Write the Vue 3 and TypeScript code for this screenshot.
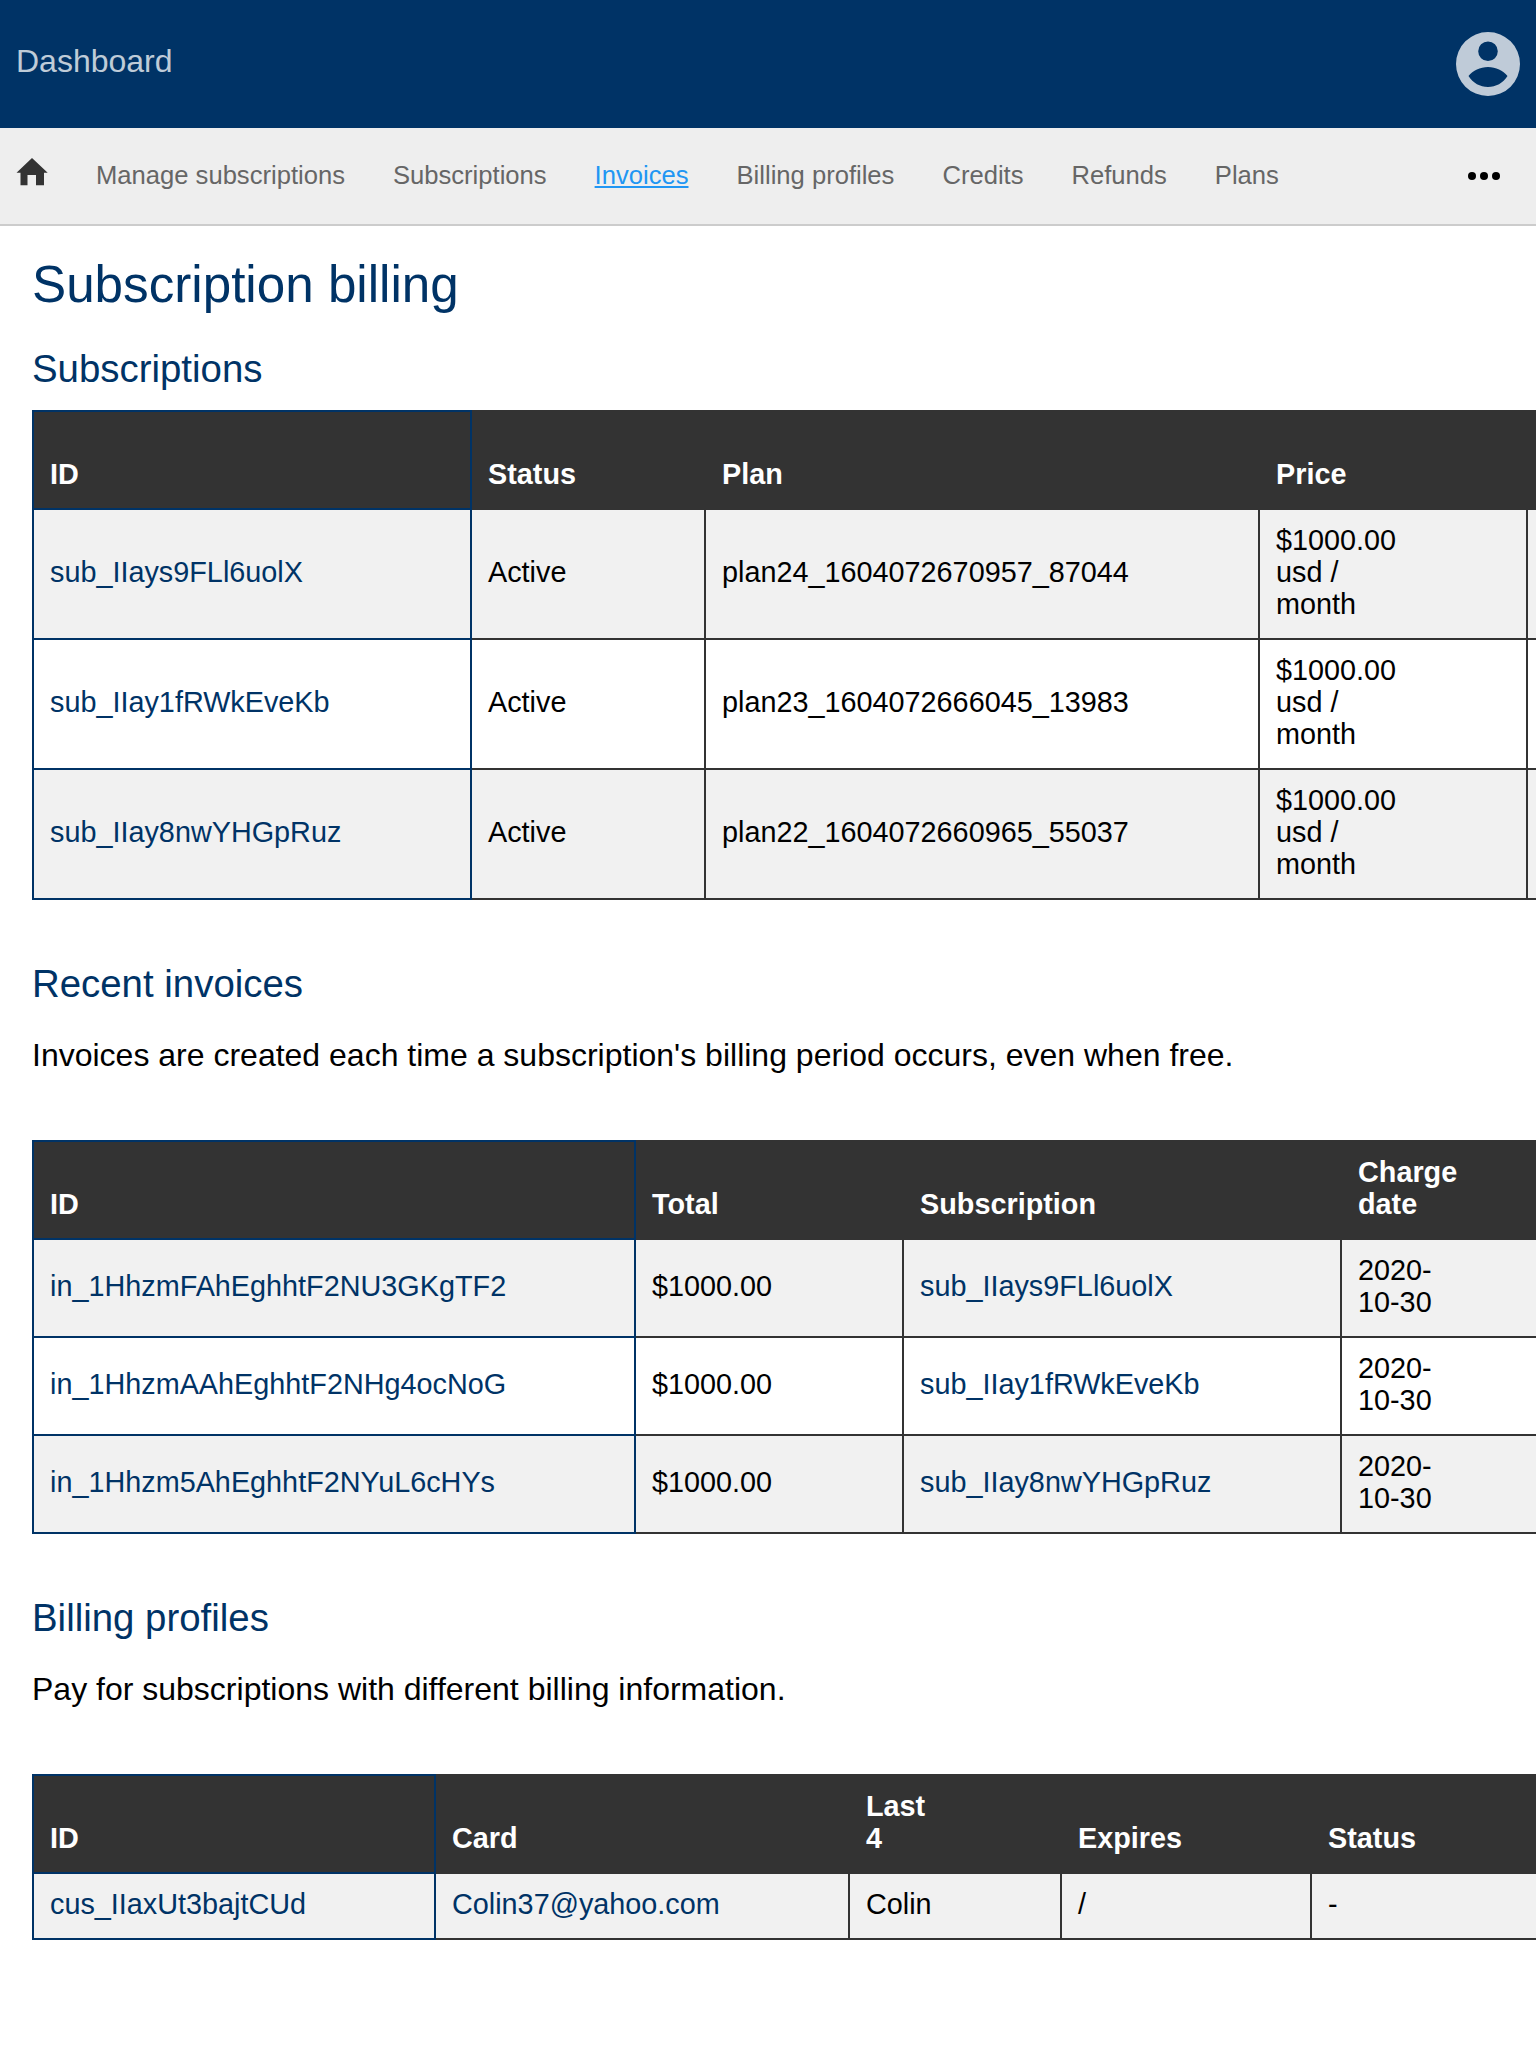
<template>
  <div class="page">
    <header class="topbar">
      <span class="brand">Dashboard</span>
      <svg class="avatar" viewBox="0 0 64 64" width="64" height="64">
        <path
          fill-rule="evenodd"
          d="M32 0a32 32 0 1 0 0 64a32 32 0 1 0 0-64ZM32 9.5a9.8 9.8 0 1 1 0 19.6a9.8 9.8 0 1 1 0-19.6ZM12.500 44C17 38.500 24 35 32 35C40 35 47 38.500 51.500 44C47 51 40 55 32 55C24 55 17 51 12.500 44Z"
        />
      </svg>
    </header>

    <nav class="navbar">
      <svg class="home" viewBox="0 0 32 32" width="32" height="32">
        <path d="M16 0 L31.700 14.700 L28 14.700 L28 27.300 L20 27.300 L20 17 L11.500 17 L11.500 27.300 L4.500 27.300 L4.500 14.700 L0.500 14.700 Z" />
      </svg>
      <a v-for="item in navItems" :key="item" :class="{ active: item === 'Invoices' }">{{ item }}</a>
      <span class="more"><i></i><i></i><i></i></span>
    </nav>

    <main class="content">
      <h1>Subscription billing</h1>

      <h2 class="first">Subscriptions</h2>
      <div class="table-wrap">
        <table class="subs">
          <colgroup>
            <col v-for="w in [438, 234, 554, 268, 200]" :key="w" :style="{ width: w + 'px' }" />
          </colgroup>
          <thead>
            <tr>
              <th>ID</th><th>Status</th><th>Plan</th><th>Price</th><th></th>
            </tr>
          </thead>
          <tbody>
            <tr v-for="s in subscriptions" :key="s.id">
              <td><a>{{ s.id }}</a></td>
              <td>Active</td>
              <td>{{ s.plan }}</td>
              <td>$1000.00<br />usd /<br />month</td>
              <td></td>
            </tr>
          </tbody>
        </table>
      </div>

      <h2>Recent invoices</h2>
      <p>Invoices are created each time a subscription's billing period occurs, even when free.</p>
      <div class="table-wrap">
        <table class="invoices">
          <colgroup>
            <col v-for="w in [602, 268, 438, 300]" :key="w" :style="{ width: w + 'px' }" />
          </colgroup>
          <thead>
            <tr>
              <th>ID</th><th>Total</th><th>Subscription</th><th>Charge<br />date</th>
            </tr>
          </thead>
          <tbody>
            <tr v-for="inv in invoices" :key="inv.id">
              <td><a>{{ inv.id }}</a></td>
              <td>$1000.00</td>
              <td><a>{{ inv.sub }}</a></td>
              <td>2020-<br />10-30</td>
            </tr>
          </tbody>
        </table>
      </div>

      <h2>Billing profiles</h2>
      <p>Pay for subscriptions with different billing information.</p>
      <div class="table-wrap">
        <table class="profiles">
          <colgroup>
            <col v-for="w in [402, 414, 212, 250, 300]" :key="w" :style="{ width: w + 'px' }" />
          </colgroup>
          <thead>
            <tr>
              <th>ID</th><th>Card</th><th>Last<br />4</th><th>Expires</th><th>Status</th>
            </tr>
          </thead>
          <tbody>
            <tr>
              <td><a>cus_IIaxUt3bajtCUd</a></td>
              <td><a>Colin37@yahoo.com</a></td>
              <td>Colin</td>
              <td>/</td>
              <td>-</td>
            </tr>
          </tbody>
        </table>
      </div>
    </main>
  </div>
</template>

<script setup lang="ts">
const navItems: string[] = [
  'Manage subscriptions',
  'Subscriptions',
  'Invoices',
  'Billing profiles',
  'Credits',
  'Refunds',
  'Plans',
]

const subscriptions = [
  { id: 'sub_IIays9FLl6uolX', plan: 'plan24_1604072670957_87044' },
  { id: 'sub_IIay1fRWkEveKb', plan: 'plan23_1604072666045_13983' },
  { id: 'sub_IIay8nwYHGpRuz', plan: 'plan22_1604072660965_55037' },
]

const invoices = [
  { id: 'in_1HhzmFAhEghhtF2NU3GKgTF2', sub: 'sub_IIays9FLl6uolX' },
  { id: 'in_1HhzmAAhEghhtF2NHg4ocNoG', sub: 'sub_IIay1fRWkEveKb' },
  { id: 'in_1Hhzm5AhEghhtF2NYuL6cHYs', sub: 'sub_IIay8nwYHGpRuz' },
]
</script>

<style>
html,
body {
  margin: 0;
  background: #fff;
}
</style>

<style scoped>
.page {
  font-family: 'Liberation Sans', Arial, sans-serif;
  font-size: 28.8px;
  color: #000;
  overflow: hidden;
}

.topbar {
  height: 128px;
  background: #003366;
  display: flex;
  align-items: center;
  justify-content: space-between;
  padding: 0 16px;
}

.brand {
  font-size: 32px;
  color: rgba(255, 255, 255, 0.75);
  margin-top: -6px;
}

.avatar {
  fill: rgba(255, 255, 255, 0.75);
}

.navbar {
  height: 96px;
  background: #eee;
  border-bottom: 2px solid #ccc;
  display: flex;
  align-items: center;
  gap: 48px;
  padding: 0 16px;
  font-size: 25.6px;
  color: #666;
}

.navbar a {
  margin-top: -2px;
}

.home {
  fill: #333;
  margin-top: -4px;
}

.navbar a.active {
  color: #2196f3;
  text-decoration: underline;
}

.more {
  margin-left: auto;
  margin-right: 20px;
  display: flex;
  gap: 4px;
}

.more i {
  width: 8px;
  height: 8px;
  border-radius: 50%;
  background: #000;
}

.content {
  padding-left: 32px;
}

h1,
h2 {
  font-weight: 400;
  color: #003366;
  margin: 0;
}

h1 {
  font-size: 51.2px;
  line-height: 59px;
  padding-top: 29px;
}

h2 {
  font-size: 38.4px;
  line-height: 48px;
  margin-top: 60px;
}

h2.first {
  margin-top: 30.5px;
  margin-bottom: 17px;
}

p {
  margin: 29px 0 66px;
  font-size: 32px;
  line-height: 37px;
}

.table-wrap {
  overflow: hidden;
}

table {
  border-collapse: collapse;
  table-layout: fixed;
}

.subs {
  width: 1694px;
}

.invoices {
  width: 1608px;
}

.profiles {
  width: 1578px;
}

th,
td {
  border: 2px solid #333;
  padding: 14px 16px 18px;
  line-height: 32px;
  text-align: left;
}

th {
  height: 64px;
  padding: 14.5px 16px 17.5px;
  background: #333;
  color: #fff;
  font-weight: 700;
  vertical-align: bottom;
}

tbody tr:nth-child(odd) td {
  background: #f1f1f1;
}

th:first-child,
td:first-child {
  border-color: #003366;
}

td a {
  color: #003366;
}
</style>
